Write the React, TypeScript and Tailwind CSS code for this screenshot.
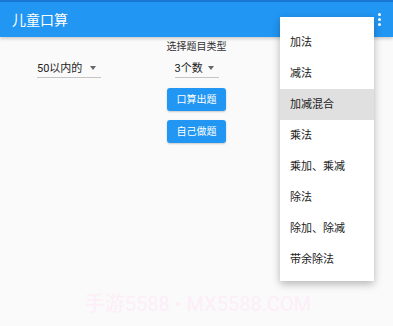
import React from "react";

const font = { fontFamily: 'Roboto, "Noto Sans CJK SC", sans-serif' };

function Dropdown({ label, width }: { label: string; width: string }) {
  return (
    <div className={`flex items-center justify-between border-b border-[#c4c4c4] h-[21px] pt-[2px] ${width}`}>
      <span className="text-[11px] text-[#222] leading-none">{label}</span>
      <span className="w-0 h-0 border-l-[3.5px] border-r-[3.5px] border-t-[4px] border-l-transparent border-r-transparent border-t-[#666] mr-[5px]" />
    </div>
  );
}

const items = ["加法", "减法", "加减混合", "乘法", "乘加、乘减", "除法", "除加、除减", "带余除法"];

export default function App() {
  return (
    <div className="relative w-[393px] h-[326px] bg-[#fafafa] overflow-hidden" style={font}>
      <div className="h-[2px] bg-[#1976d2]" />
      <div className="h-[35px] bg-[#2196f3] flex items-center justify-between pl-[12px] pr-[12px] shadow-[0_2px_3px_rgba(0,0,0,0.18)] relative z-10">
        <span className="text-[14px] text-white leading-none">儿童口算</span>
        <div className="flex flex-col gap-[2px] items-center">
          <span className="w-[3px] h-[3px] rounded-full bg-white" />
          <span className="w-[3px] h-[3px] rounded-full bg-white" />
          <span className="w-[3px] h-[3px] rounded-full bg-white" />
        </div>
      </div>

      <div className="grid grid-cols-3">
        <div className="flex flex-col items-start pl-[37px] pt-[20px]">
          <Dropdown label="50以内的" width="w-[64px]" />
        </div>
        <div className="flex flex-col items-center">
          <div className="h-[17px] flex items-center pt-[2px] text-[10px] text-[#333] leading-none">选择题目类型</div>
          <div className="mt-[3px]">
            <Dropdown label="3个数" width="w-[44px]" />
          </div>
          <div className="flex flex-col gap-[9px] mt-[10px]">
            <div className="w-[59px] h-[23px] rounded-[3px] bg-[#2196f3] text-white text-[10px] flex items-center justify-center shadow-[0_1px_2px_rgba(0,0,0,0.2)]">口算出题</div>
            <div className="w-[59px] h-[23px] rounded-[3px] bg-[#2196f3] text-white text-[10px] flex items-center justify-center shadow-[0_1px_2px_rgba(0,0,0,0.2)]">自己做题</div>
          </div>
        </div>
        <div />
      </div>

      <div className="absolute left-0 right-0 top-[294px] flex justify-center pl-[3px]">
        <span className="text-[20px] leading-none text-[#fdeef7] tracking-[0px]">手游5588 • MX5588.COM</span>
      </div>

      <div className="absolute left-[280px] top-[17px] w-[94px] bg-white pt-[10px] pb-[6px] shadow-[0_3px_8px_rgba(0,0,0,0.28)] z-20">
        {items.map((t, i) => (
          <div
            key={t}
            className={`h-[31px] flex items-center pl-[10px] pt-[2px] text-[11px] text-[#222] ${i === 2 ? "bg-[#e0e0e0]" : ""}`}
          >
            {t}
          </div>
        ))}
      </div>
    </div>
  );
}
